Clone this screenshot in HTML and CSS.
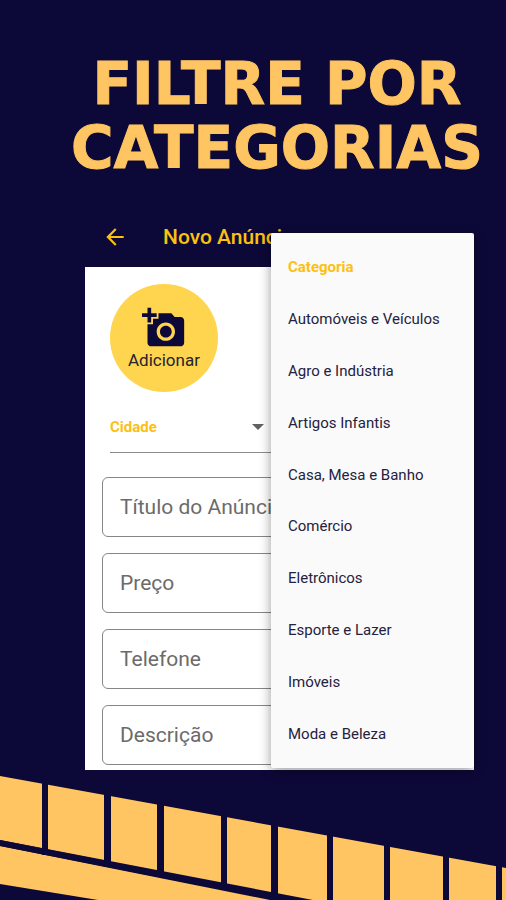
FILE: index.html
```html
<!DOCTYPE html>
<html lang="pt-BR">
<head>
    <meta charset="UTF-8">
    <meta name="viewport" content="width=device-width, initial-scale=1.0">
    <title>Filtre por categorias</title>
    <link rel="stylesheet" href="styles.css">
</head>
<body>
    <main class="poster">
        <h1>FILTRE POR<br>CATEGORIAS</h1>

        <section class="screen">
            <header class="appbar">
                <button class="back" type="button" aria-label="Voltar">
                    <svg viewBox="0 0 24 24" width="26" height="26"><path d="M20 11H7.83l5.59-5.59L12 4l-8 8 8 8 1.41-1.41L7.83 13H20v-2z"/></svg>
                </button>
                <h2>Novo Anúncio</h2>
            </header>

            <form class="form">
                <button class="add-photo" type="button">
                    <svg viewBox="0 0 24 24" width="44" height="44"><path d="M3 4V1h2v3h3v2H5v3H3V6H0V4h3zm3 6V7h3V4h7l1.83 2H21c1.1 0 2 .9 2 2v12c0 1.1-.9 2-2 2H5c-1.1 0-2-.9-2-2V10h3zm7 9c2.76 0 5-2.24 5-5s-2.24-5-5-5-5 2.24-5 5 2.24 5 5 5zm-3.2-5c0 1.77 1.43 3.2 3.2 3.2s3.2-1.43 3.2-3.2-1.43-3.2-3.2-3.2-3.2 1.43-3.2 3.2z"/></svg>
                    Adicionar
                </button>

                <div class="dropdown">
                    <select aria-label="Cidade">
                        <option>Cidade</option>
                    </select>
                    <svg viewBox="0 0 12 6" width="12" height="6"><path d="M0 0h12L6 6z"/></svg>
                </div>

                <div class="fields">
                    <input type="text" placeholder="Título do Anúncio" aria-label="Título do Anúncio">
                    <input type="text" placeholder="Preço" aria-label="Preço">
                    <input type="tel" placeholder="Telefone" aria-label="Telefone">
                    <input type="text" placeholder="Descrição" aria-label="Descrição">
                </div>
            </form>

            <!-- menu aberto sobre o formulário -->
            <div class="menu">
                <button class="selected" type="button">Categoria</button>
                <button type="button">Automóveis e Veículos</button>
                <button type="button">Agro e Indústria</button>
                <button type="button">Artigos Infantis</button>
                <button type="button">Casa, Mesa e Banho</button>
                <button type="button">Comércio</button>
                <button type="button">Eletrônicos</button>
                <button type="button">Esporte e Lazer</button>
                <button type="button">Imóveis</button>
                <button type="button">Moda e Beleza</button>
            </div>
        </section>

        <svg class="stripes" viewBox="0 0 506 124" aria-hidden="true">
            <path class="gold" d="M0 0L506 92V164L0 64z"/>
            <path class="gold" d="M0 70L275 124H98L0 108z"/>
            <path class="gap" d="M42 0h6v79h-6zM104 0h7v91h-7zM157 0h7v101h-7zM221 0h6v114h-6zM271 0h7v124h-7zM327 0h6v124h-6zM384 0h6v124h-6zM443 0h6v124h-6zM496 0h6v124h-6z"/>
            <path class="gap" d="M0 64L318 125H275L0 70z"/>
        </svg>
    </main>
</body>
</html>
```

FILE: styles.css
```css
* {
    box-sizing: border-box;
}
body {
    margin: 0;
    background-color: #0c0938;
    font-family: Roboto, "Liberation Sans", sans-serif;
}
button, input, select {
    font-family: inherit;
}
button {
    border: none;
    cursor: pointer;
}
.poster {
    display: flex;
    flex-direction: column;
    min-height: 100vh;
    overflow: hidden;
}
h1 {
    margin: 52px 0 0 48px;
    font-family: "DejaVu Sans", sans-serif;
    font-weight: bold;
    font-size: 58px;
    line-height: 64px;
    text-align: center;
    white-space: nowrap;
    color: #ffc562;
    -webkit-text-stroke: 1px #ffc562;
}
.screen {
    position: relative;
    margin: 27px 32px 0 85px;
    background-color: #ffffff;
}
.appbar {
    display: flex;
    align-items: center;
    gap: 35px;
    height: 60px;
    padding-left: 17px;
    background-color: #0c0938;
}
.back {
    display: flex;
    padding: 0;
    background: none;
    fill: #fdc010;
}
h2 {
    margin: 0;
    font-size: 21px;
    font-weight: 500;
    color: #fdc010;
}
.form {
    padding: 17px 17px 5px;
}
.add-photo {
    display: flex;
    flex-direction: column;
    align-items: center;
    width: 108px;
    height: 108px;
    margin-left: 8px;
    padding: 22px 0 0;
    border-radius: 50%;
    background-color: #ffd54f;
    font-size: 17px;
    color: #26222f;
}
.add-photo svg {
    fill: #0c0938;
}
.dropdown {
    display: flex;
    align-items: center;
    width: 50%;
    height: 52px;
    margin: 9px 0 24px 8px;
    border-bottom: 1px solid #8c8c8c;
}
.dropdown select {
    flex: 1;
    padding: 0;
    border: none;
    appearance: none;
    background: none;
    font-size: 15px;
    font-weight: bold;
    color: #fdc010;
}
.dropdown svg {
    margin-right: 24px;
    fill: #616161;
}
.fields {
    display: flex;
    flex-direction: column;
    gap: 16px;
}
.fields input {
    width: 100%;
    height: 60px;
    padding: 0 17px;
    border: 1px solid #868686;
    border-radius: 6px;
    background: none;
    font-size: 21px;
}
.fields input::placeholder {
    color: #6b6b6b;
}
.menu {
    position: absolute;
    top: 26px;
    right: 0;
    bottom: 2px;
    display: flex;
    flex-direction: column;
    width: 203px;
    padding: 8px 0;
    border-radius: 2px;
    background-color: #fafafa;
    box-shadow: 0 3px 12px rgba(0, 0, 0, 0.4);
}
.menu button {
    flex: 1;
    padding: 0 17px;
    background: none;
    font-size: 15px;
    text-align: left;
    color: #25213f;
}
.menu .selected {
    font-weight: bold;
    color: #fdc010;
}
.stripes {
    display: block;
    width: 100%;
    margin-top: auto;
}
.gold {
    fill: #ffc562;
}
.gap {
    fill: #0c0938;
}
```
